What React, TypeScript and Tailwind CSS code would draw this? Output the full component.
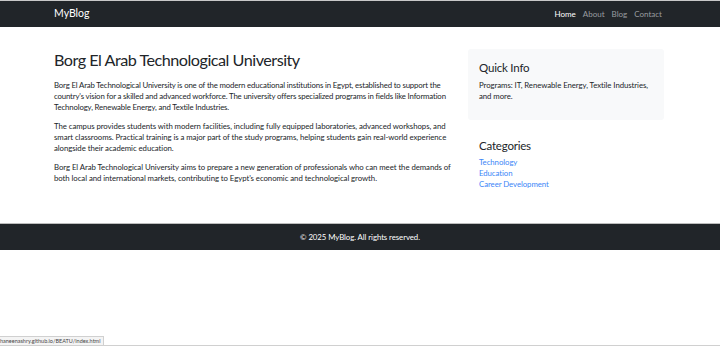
const navLinks = [
  { label: "Home", active: true },
  { label: "About" },
  { label: "Blog" },
  { label: "Contact" },
];

const categories = ["Technology", "Education", "Career Development"];

export default function App() {
  return (
    <div
      className="relative h-[346px] w-[720px] overflow-hidden bg-white text-[#212529]"
      style={{ fontFamily: 'Lato, "Noto Sans", sans-serif' }}
    >
      {/* Navbar */}
      <div className="border-t border-[#c8c8c8] bg-[#212529]">
        <div className="mx-[54px] flex h-[26px] items-center justify-between">
          <span className="text-[10.5px] text-white">MyBlog</span>
          <nav className="mr-[4px] flex gap-[7px] text-[8px]">
            {navLinks.map((l) => (
              <span key={l.label} className={l.active ? "text-white" : "text-[#9a9da0]"}>
                {l.label}
              </span>
            ))}
          </nav>
        </div>
      </div>

      {/* Main */}
      <div className="mx-[54px] flex gap-[12px] pt-[22px] pb-[33px]">
        <div className="w-[402px]">
          <h1 className="mb-[9px] text-[16.2px] leading-[22px] tracking-[-0.5px]">Borg El Arab Technological University</h1>
          <div className="flex flex-col gap-[8px] text-[7.8px] leading-[11px] tracking-[-0.06px]">
            <p className="tracking-[-0.15px]">
              Borg El Arab Technological University is one of the modern educational institutions in Egypt, established to support the
              country's vision for a skilled and advanced workforce. The university offers specialized programs in fields like Information
              Technology, Renewable Energy, and Textile Industries.
            </p>
            <p>
              The campus provides students with modern facilities, including fully equipped laboratories, advanced workshops, and
              smart classrooms. Practical training is a major part of the study programs, helping students gain real-world experience
              alongside their academic education.
            </p>
            <p>
              Borg El Arab Technological University aims to prepare a new generation of professionals who can meet the demands of
              both local and international markets, contributing to Egypt's economic and technological growth.
            </p>
          </div>
        </div>

        <aside className="w-[196px]">
          <div className="rounded-[3px] bg-[#f8f9fa] px-[11px] pt-[11px] pb-[18px]">
            <h4 className="mb-[4px] text-[11.5px] leading-[16px] tracking-[-0.2px]">Quick Info</h4>
            <p className="text-[7.8px] leading-[11px] tracking-[-0.06px]">Programs: IT, Renewable Energy, Textile Industries, and more.</p>
          </div>
          <div className="px-[11px] pt-[18px]">
            <h4 className="mb-[3px] text-[11.5px] leading-[16px] tracking-[-0.2px]">Categories</h4>
            <ul className="text-[7.8px] leading-[11px] tracking-[-0.06px] text-[#3b86f7]">
              {categories.map((c) => (
                <li key={c}>{c}</li>
              ))}
            </ul>
          </div>
        </aside>
      </div>

      {/* Footer */}
      <footer className="border-t border-[#bdbdbd] bg-[#212529] py-[8px] text-center text-[7.8px] leading-[10px] tracking-[-0.06px] text-white">
        © 2025 MyBlog. All rights reserved.
      </footer>

      {/* Status bar overlay */}
      <div className="absolute bottom-0 left-0 right-0 h-px bg-[#d0d0d0]" />
      <div className="absolute bottom-0 left-0 flex h-[10px] items-center border border-l-0 border-[#d0d0d0] bg-[#f4f4f4] pr-[3px] text-[5.5px] text-[#444]">
        haneenashry.github.io/BEATU/index.html
      </div>
    </div>
  );
}
